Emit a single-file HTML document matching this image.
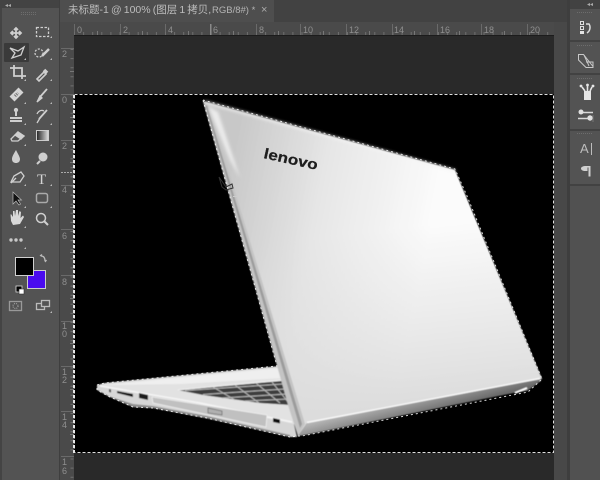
<!DOCTYPE html>
<html><head><meta charset="utf-8"><style>
html,body{margin:0;padding:0;background:#424242;}
#p{position:relative;width:600px;height:480px;overflow:hidden;background:#424242;font-family:"Liberation Sans","Noto Sans CJK SC",sans-serif;}
#p>div{position:absolute;}
</style></head><body><div id="p">
<div style="left:0;top:0;width:60px;height:480px;background:#535353;"></div>
<div style="left:0;top:0;width:2px;height:480px;background:#444;"></div>
<div style="left:0;top:0;width:60px;height:8px;background:#434343;"></div>
<div style="left:59px;top:0;width:1px;height:480px;background:#3f3f3f;"></div>
<div style="left:60px;top:0;width:510px;height:22px;background:#424242;"></div>
<div style="left:60px;top:0;width:214px;height:22px;background:#4e4e4e;"></div>
<div style="left:68px;top:3px;color:#bdbdbd;font-size:10.5px;line-height:15px;white-space:nowrap;word-spacing:-0.8px;">未标题-1 @ 100% (图层 1 拷贝,</div>
<div style="left:212px;top:3px;color:#b4b4b4;font-size:9.5px;line-height:15px;white-space:nowrap;">RGB/8#) *</div>
<div style="left:261px;top:4px;color:#aaa;font-size:11px;line-height:13px;">×</div>
<div style="left:60px;top:22px;width:494px;height:13px;background:#4a4a4a;"></div>
<div style="left:60px;top:22px;width:14px;height:458px;background:#4a4a4a;"></div>
<div style="left:74px;top:35px;width:480px;height:445px;background:#292929;"></div>
<div style="left:74px;top:35px;width:480px;height:1px;background:#1c1c1c;"></div>
<div style="left:74px;top:94px;width:480px;height:359px;background:#000;"></div>
<div style="left:554px;top:22px;width:14px;height:458px;background:#484848;"></div>
<div style="left:567px;top:0;width:3px;height:480px;background:#3e3e3e;"></div>
<div style="left:570px;top:0;width:30px;height:480px;background:#424242;"></div>
<div style="left:570px;top:9px;width:30px;height:31px;background:#535353;"></div>
<div style="left:570px;top:42px;width:30px;height:31px;background:#535353;"></div>
<div style="left:570px;top:75px;width:30px;height:54px;background:#535353;"></div>
<div style="left:570px;top:131px;width:30px;height:53px;background:#535353;"></div>
<div style="left:570px;top:186px;width:30px;height:294px;background:#515151;"></div>

<svg style="position:absolute;left:0;top:0" width="600" height="480" viewBox="0 0 600 480">
<defs>
<linearGradient id="lid" gradientUnits="userSpaceOnUse" x1="225" y1="190" x2="430" y2="230"><stop offset="0" stop-color="#c8c8c8"/><stop offset="0.45" stop-color="#e6e6e6"/><stop offset="1" stop-color="#fbfbfb"/></linearGradient>
<linearGradient id="lid2" gradientUnits="userSpaceOnUse" x1="380" y1="230" x2="400" y2="410"><stop offset="0" stop-color="#dcdcdc" stop-opacity="0"/><stop offset="1" stop-color="#dcdcdc" stop-opacity="1"/></linearGradient>
<linearGradient id="band" gradientUnits="userSpaceOnUse" x1="400" y1="398" x2="406" y2="420"><stop offset="0" stop-color="#b8b8b8"/><stop offset="1" stop-color="#6a6a6a"/></linearGradient>
<linearGradient id="g2"><stop offset="0" stop-color="#222"/><stop offset="1" stop-color="#e0e0e0"/></linearGradient>
<filter id="soft" x="-5%" y="-5%" width="110%" height="110%"><feGaussianBlur stdDeviation="0.45"/></filter>
<filter id="soft2" x="-30%" y="-30%" width="160%" height="160%"><feGaussianBlur stdDeviation="1.500"/></filter>
</defs>

<!-- ruler marks -->
<g stroke="#6a6a6a" stroke-width="1">
<path d="M74.500 24V35M120.500 24V35M165.500 24V35M211.500 24V35M256.500 24V35M300.500 24V35M346.500 24V35M392.500 24V35M437.500 24V35M481.500 24V35M527.500 24V35"/>
<path d="M61 48.500H74M61 94.500H74M61 140.500H74M61 185.500H74M61 229.500H74M61 275.500H74M61 321.500H74M61 366.500H74M61 411.500H74M61 456.500H74"/>
</g>
<path d="M74 33.500H554" stroke="#6f6f6f" stroke-width="3" stroke-dasharray="1 8.100"/>
<path d="M72 49V480" stroke="#6f6f6f" stroke-width="3" stroke-dasharray="1 8.100"/>
<path d="M97.500 31V35M142.500 31V35M188.500 31V35M233.500 31V35M278.500 31V35M323.500 31V35M369.500 31V35M414.500 31V35M459.500 31V35M504.500 31V35" stroke="#777"/>
<path d="M70 71.500H74M70 117.500H74M70 162.500H74M70 207.500H74M70 252.500H74M70 298.500H74M70 343.500H74M70 389.500H74M70 434.500H74" stroke="#777"/>
<path d="M210.500 24V35" stroke="#8a8a8a"/>
<path d="M61 172.500H74" stroke="#aaa" stroke-dasharray="2 1"/>
<g font-size="9" fill="#8f8f8f" font-family="Liberation Sans">
<text x="77" y="33">0</text><text x="123" y="33">2</text><text x="168" y="33">4</text><text x="213" y="33">6</text><text x="259" y="33">8</text><text x="303" y="33">10</text><text x="349" y="33">12</text><text x="394" y="33">14</text><text x="440" y="33">16</text><text x="484" y="33">18</text><text x="530" y="33">20</text>
<text x="62" y="57">2</text><text x="62" y="103">0</text><text x="62" y="149">2</text><text x="62" y="193">4</text><text x="62" y="239">6</text><text x="62" y="285">8</text>
<text x="62" y="329">1</text><text x="62" y="337">0</text><text x="62" y="375">1</text><text x="62" y="383">2</text><text x="62" y="420">1</text><text x="62" y="428">4</text><text x="62" y="465">1</text><text x="62" y="474">6</text>
</g>

<!-- laptop -->
<g filter="url(#soft)">
<path d="M97 385L105 383L280 366L296 425L200 405L110 392Z" fill="#e2e2e2"/>
<path d="M105 385L280 368L283 378L180 384Z" fill="#efefef"/>
<path d="M97 385L103 386L200 404L294 424L297 437L290 437L207 418L153 408L133 407L110 397L97 390Z" fill="#d6d6d6"/>
<path d="M105 395L133 404L153 406L207 416L290 435L290 437L207 418.500L153 408L133 407L110 397Z" fill="#8f8f8f"/>
<path d="M100 386L200 403L292 422" fill="none" stroke="#f6f6f6" stroke-width="1.500"/>
<path d="M152 397L267 415L266 427L153 403Z" fill="#c0c0c0" stroke="#efefef" stroke-width=".8"/>
<path d="M208 408L222 411L222 415L208 413Z" fill="#b0b0b0" stroke="#666" stroke-width=".7"/>
<path d="M117 391L133 394L133 397L117 393Z" fill="#111"/>
<path d="M139 393L148 395L148 400L139 398Z" fill="#1a1a1a"/>
<path d="M109 389l2 .5 0 3-2-.5z" fill="#444"/>
<path d="M273 418l7 1.500 0 4-7-1.500z" fill="#111"/>
<path d="M178 390L282 381L291 405L260 403L203 395Z" fill="#3c3c3c"/>
<g stroke="#bdbdbd" stroke-width="1" fill="none">
<path d="M185 390.500L283 384M203 394.500L285 389M222 398L287 394M245 401L289 399"/>
<path d="M213 387l22 13M235 385l24 18M256 383l24 20M272 382l16 20"/>
</g>
<path d="M178 390L282 380" stroke="#f2f2f2" fill="none"/>
<path d="M203 101L455 170L542 379L307 423L298 436L290 410Z" fill="url(#lid)"/>
<path d="M203 101L455 170L542 379L307 423L298 436L290 410Z" fill="url(#lid2)"/>
<path d="M203 101L209 105L305 424L298 436L288 405Z" fill="#c4c4c4"/>
<path d="M205.500 106L207 105L302 424L300 428Z" fill="#9c9c9c"/>
<path d="M298 436L307 423L540 379L541 381L527 391L513 393L305 435Z" fill="url(#band)"/>
<path d="M307 422.500L540 378.500" fill="none" stroke="#fafafa" stroke-width="1.400"/>
<path d="M527 388L515 393" stroke="#fff" stroke-width="2" fill="none"/>
</g>
<path d="M208 106L218 112L240 178L230 160Z" fill="#fbfbfb" opacity=".7" filter="url(#soft2)"/>
<path d="M205 102L455 171" stroke="#f4f4f4" stroke-width="2" fill="none" filter="url(#soft2)"/>
<text x="263" y="158" font-size="14.500" font-weight="bold" fill="#1e1e1e" stroke="#1e1e1e" stroke-width=".25" font-family="Liberation Sans" transform="rotate(12.500 263 158)" textLength="55" lengthAdjust="spacingAndGlyphs">lenovo</text>

<!-- selection -->
<path d="M203 100L455 169L467 196L542 379L528 392L302 436L298 436L290 437L207 418L153 408L133 407L110 397L97 390L97 385L105 383L277 366L203 100Z" fill="none" stroke="#fff" stroke-width="1" stroke-dasharray="2 3" opacity=".85"/>
<rect x="74.500" y="94.500" width="479" height="358" fill="none" stroke="#e0e0e0" stroke-width="1" stroke-dasharray="3 2"/>
<path d="M74 95V453" stroke="#e8e8e8" stroke-width="2" stroke-dasharray="3 2"/>
<path d="M219 177L222 187L226 190L233 188L232 184L226 187Z" fill="none" stroke="#333" stroke-width="1"/>
<path d="M233 196.500H238" stroke="#ccc"/>

<!-- toolbar top -->
<text x="5" y="7" font-size="6" fill="#aaa" font-family="DejaVu Sans">◂◂</text>
<path d="M21 12.500H37" stroke="#6d6d6d" stroke-dasharray="1 1"/>
<path d="M21 14.500H37" stroke="#6d6d6d" stroke-dasharray="1 1"/>
<rect x="4" y="43" width="25" height="19" fill="#3a3a3a" rx="1"/>
<g fill="none" stroke="#cfcfcf" stroke-width="1.300">
<path d="M16 28V38M11 33H21M14 30l2-2 2 2M14 36l2 2 2-2M13 31l-2 2 2 2M19 31l2 2-2 2" stroke-width="1.800"/>
<rect x="36.500" y="27.500" width="12" height="9" stroke-dasharray="2.500 1.500"/>
<path d="M10 48L18 51L24 47L21 55L12 58L15 53Z"/>
<circle cx="39" cy="53" r="4" stroke-dasharray="2 1.500"/>
<path d="M42 56L49 49" stroke-width="2.500"/>
<path d="M10 68H22V79M14 65V76H26" stroke-width="1.800"/>
<path d="M37 79L44 72L46 74L39 81Z" stroke-width="1.600"/>
<path d="M44 70L47 73" stroke-width="3.500"/>
<path d="M47 89L40 97" stroke-width="1.800"/>
<path d="M37 102L40 96L42 98Z" fill="#d0d0d0"/>
<path d="M16 109V116M10 118H22M10 121H22" stroke-width="2"/>
<circle cx="16" cy="110" r="1.500" fill="#d0d0d0"/>
<path d="M47 110L39 119" stroke-width="1.800"/>
<path d="M37 114C39 110 42 110 44 111M37 123L40 118"/>
<path d="M11 139L18 132L24 136L18 141H12Z"/>
<path d="M18 132L24 136L21 139L15 135Z" fill="#d0d0d0"/>
<path d="M11 182L14 176L21 172L24 176L20 182Z"/>
<path d="M11 183L16 178"/>
<rect x="36.500" y="193.500" width="11" height="9" rx="2" stroke-width="1.500" stroke="#aaa"/>
<circle cx="41" cy="218" r="4.500" stroke-width="1.500"/>
<path d="M44 221L48 225" stroke-width="2"/>
<rect x="9.500" y="301.500" width="12" height="9" stroke="#999"/>
<circle cx="15.500" cy="306" r="2.500" stroke="#999" stroke-dasharray="1 1"/>
<rect x="36.500" y="303.500" width="8" height="6" stroke="#bbb"/>
<rect x="41.500" y="300.500" width="8" height="6" stroke="#bbb" fill="#535353"/>
<path d="M41 256C44 256 45 258 45 261M40 256l2-1.500M45 262l1.500-2" stroke="#bbb"/>
</g>
<path d="M12 99L21 90" stroke="#d4d4d4" stroke-width="7"/>
<path d="M15 96L18 93" stroke="#6a6a6a" stroke-width="3" stroke-dasharray="1 1"/>
<rect x="36.500" y="130.500" width="12" height="10" fill="url(#g2)" stroke="#ccc"/>
<path d="M16 150C13 155 12 157 12 159C12 162 14 163 16 163C18 163 20 162 20 159C20 157 18 154 16 150Z" fill="#cfcfcf"/>
<circle cx="43" cy="157" r="4.500" fill="#cfcfcf"/>
<path d="M40 161L37 164" stroke="#cfcfcf" stroke-width="2"/>
<text x="37" y="184" font-size="15" fill="#d4d4d4" font-family="Liberation Serif">T</text>
<path d="M13 192V204L16 201L19 205L20.500 204L18 200H21.500Z" fill="#111" stroke="#bbb" stroke-width=".7"/>
<path d="M11 221C11 217 10 215 11 214L13 217V211L14.500 211L15 216L16 210L18 210L18 216L19.500 211L21 212L20.500 218L23 215.500L24 217L20 224L13 225Z" fill="#d8d8d8"/>
<circle cx="11" cy="240" r="1.700" fill="#c8c8c8"/><circle cx="16" cy="240" r="1.700" fill="#c8c8c8"/><circle cx="21" cy="240" r="1.700" fill="#c8c8c8"/>
<g fill="#bbb">
<path d="M52 38l0-2-2 2zM26 60l0-2-2 2zM52 60l0-2-2 2zM26 81l0-2-2 2zM52 81l0-2-2 2zM26 104l0-2-2 2zM52 104l0-2-2 2zM26 125l0-2-2 2zM52 125l0-2-2 2zM26 146l0-2-2 2zM52 146l0-2-2 2zM26 186l0-2-2 2zM52 186l0-2-2 2zM26 208l0-2-2 2zM52 208l0-2-2 2zM26 228l0-2-2 2zM26 249l0-2-2 2zM52 313l0-2-2 2z"/>
</g>
<rect x="27.500" y="270.500" width="18" height="18" fill="#4a0bf0" stroke="#ccc"/>
<rect x="15.500" y="257.500" width="18" height="18" fill="#000" stroke="#d0d0d0"/>
<rect x="16" y="286" width="6" height="6" fill="#000" stroke="#ddd" stroke-width=".8"/>
<rect x="19" y="289" width="5" height="5" fill="#fff" stroke="#333" stroke-width=".6"/>

<!-- right panel icons -->
<text x="590" y="6" font-size="6" fill="#aaa" font-family="DejaVu Sans" text-anchor="middle">◂◂</text>
<path d="M577 12.500H592M577 45.500H592M577 78.500H592M577 133.500H592" stroke="#6d6d6d" stroke-dasharray="1 1"/>
<rect x="580.500" y="21.500" width="3" height="3" fill="none" stroke="#ddd"/>
<rect x="580.500" y="26.500" width="3" height="3" fill="none" stroke="#ddd"/>
<rect x="580" y="31" width="4" height="3" fill="#e4e4e4"/>
<path d="M586 24H589C591 27 590 31 587 33" fill="none" stroke="#ddd" stroke-width="1.500"/>
<g fill="none" stroke="#c8c8c8">
<path d="M578.500 54.500H583.500L593 66.500V67.500H586L578.500 60Z"/>
<path d="M584 55L589 66M586 62H593V67"/>
</g>
<path d="M584 91H591V100H584Z" fill="#e6e6e6"/>
<path d="M585 91L582 87M587.500 91V86M590 91L592 87" stroke="#e6e6e6" stroke-width="1.600"/>
<circle cx="581" cy="86" r="1.400" fill="#e6e6e6"/><circle cx="587.500" cy="85" r="1.400" fill="#e6e6e6"/><circle cx="593" cy="86" r="1.400" fill="#e6e6e6"/>
<path d="M580 112.500H593M578 118.500H589" stroke="#d8d8d8" stroke-width="1.500"/>
<circle cx="581" cy="112" r="2.500" fill="#e0e0e0"/><circle cx="590" cy="118" r="2.700" fill="#e0e0e0"/>
<path d="M593 115V122" stroke="#777"/>
<text x="580" y="153" font-size="13" fill="#bdbdbd" font-family="Liberation Sans">A</text>
<path d="M591.500 143V155" stroke="#bdbdbd"/>
<path d="M586 166H590V176.500H588.500V167.500H587.500V171H585C583 171 581 170 581 168.500C581 167 583 166 586 166Z" fill="#d0d0d0"/>
<path d="M590 166V176.500" stroke="#d0d0d0"/>
</svg>
</div></body></html>
